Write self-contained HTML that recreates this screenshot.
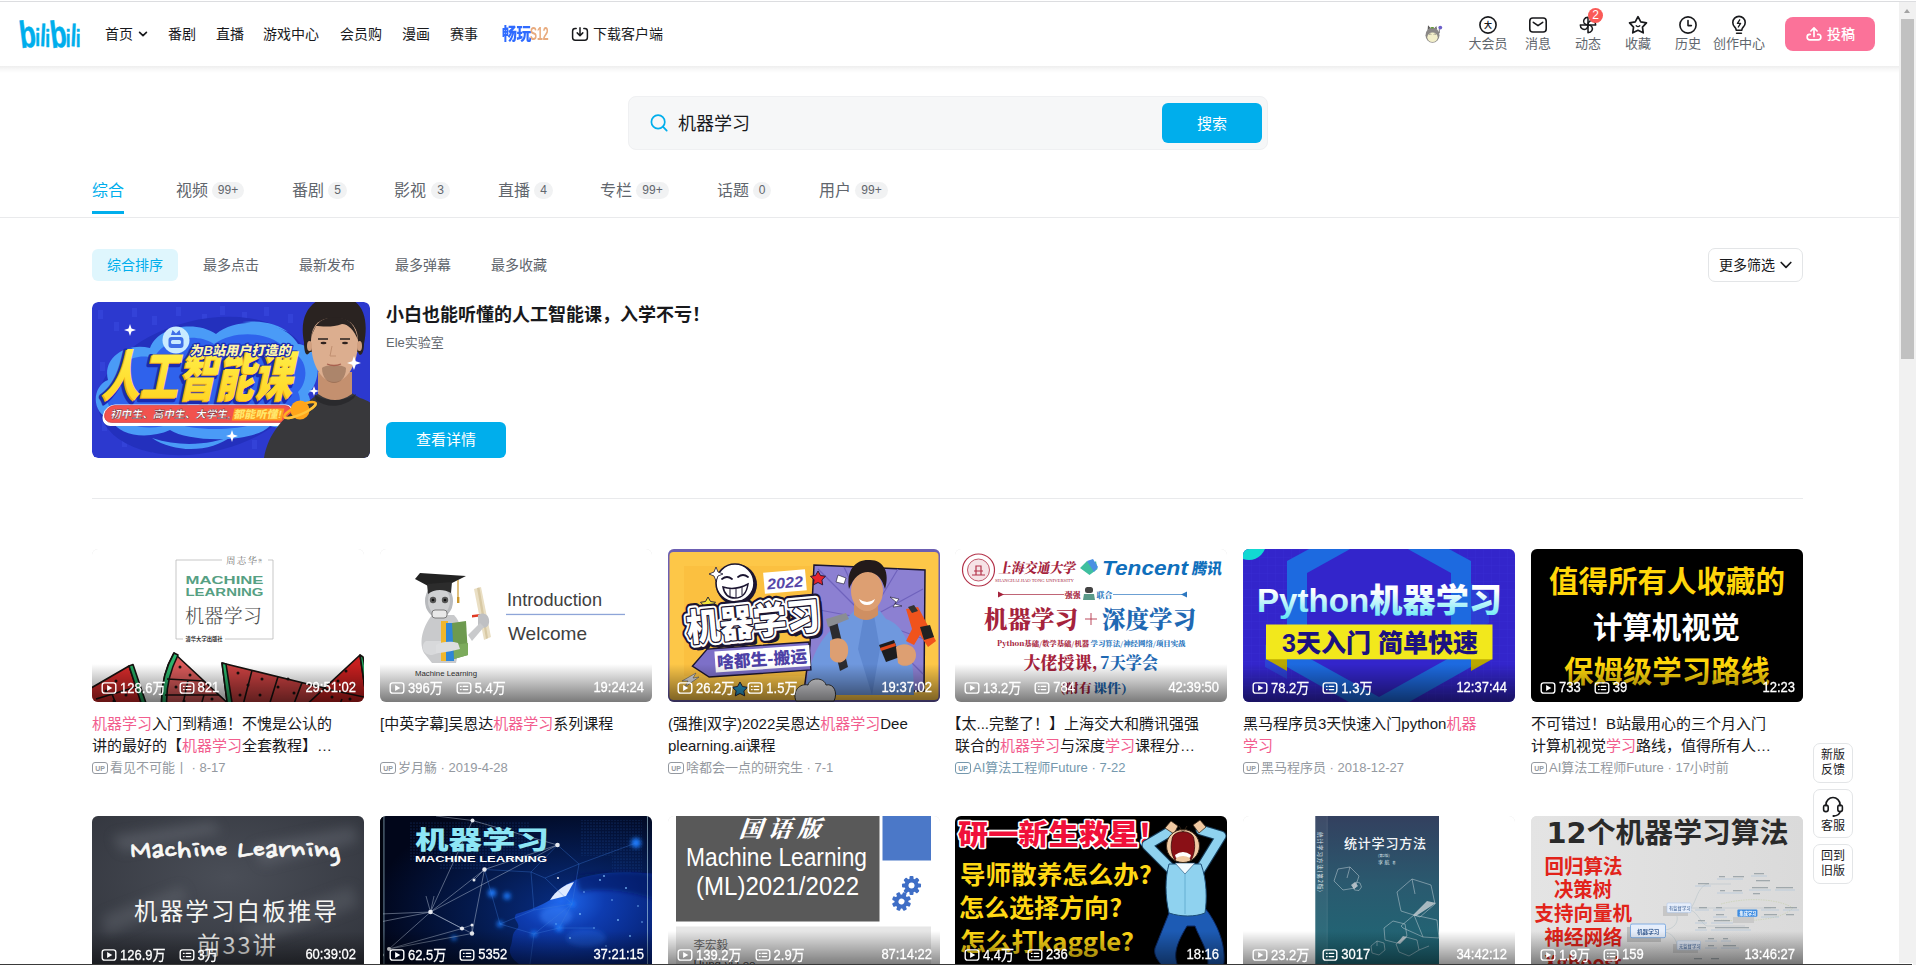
<!DOCTYPE html>
<html lang="zh-CN">
<head>
<meta charset="utf-8">
<title>机器学习-哔哩哔哩_Bilibili</title>
<style>
*{box-sizing:border-box;margin:0;padding:0}
html,body{width:1916px;height:965px;overflow:hidden;background:#fff}
body{position:relative;font-family:"Liberation Sans","Noto Sans CJK SC",sans-serif;color:#18191c;font-size:14px;-webkit-font-smoothing:antialiased}
.abs{position:absolute}
a{color:inherit;text-decoration:none}
/* top chrome line */
#topline{position:absolute;left:0;top:1px;width:1916px;height:1px;background:#dcdde0;z-index:50}
/* header */
#hdr{position:absolute;left:0;top:2px;width:1899px;height:64px;background:#fff;z-index:10}
#hsh{position:absolute;left:0;top:66px;width:1899px;height:7px;background:linear-gradient(rgba(0,0,0,.068),rgba(0,0,0,.03) 45%,rgba(0,0,0,0));z-index:9}
.nav{position:absolute;top:0;height:64px;line-height:64px;font-size:14px;color:#18191c;white-space:nowrap}
.ri{position:absolute;top:0;width:60px;text-align:center;font-size:13px;color:#61666d;white-space:nowrap}
.ri span{position:absolute;left:0;width:100%;top:33px;line-height:18px}
.ri svg{position:absolute;left:50%;margin-left:-10px;top:13px;width:20px;height:20px}
#upload{position:absolute;left:1785px;top:15px;width:90px;height:34px;border-radius:8px;background:#fb7299;color:#fff;font-size:14px;font-weight:500}
/* scrollbar */
#sb{position:absolute;left:1899px;top:2px;width:17px;height:961px;background:#f1f1f1;z-index:40}
#sbc{position:absolute;left:1913px;top:963px;width:3px;height:2px;background:#f1f1f1;z-index:61}
#sb i{position:absolute;left:2px;top:17px;width:13px;height:340px;background:#c1c1c1}
#sb b{position:absolute;left:5px;top:6.500px;width:0;height:0;border:3.500px solid transparent;border-top:0;border-bottom:4px solid #a3a3a3}
/* search */
#sbox{position:absolute;left:628px;top:96px;width:640px;height:54px;border:1px solid #eff0f2;border-radius:8px;background:#f6f7f8}
#sbox .q{position:absolute;left:49px;top:2px;line-height:51px;font-size:18px;color:#18191c}
#sbox .btn{position:absolute;left:533px;top:6px;width:100px;height:40px;border-radius:6px;background:#00aeec;color:#fff;font-size:15px;text-align:center;line-height:41px}
/* tabs */
.tab{position:absolute;top:178.600px;font-size:16px;line-height:24px;color:#61666d;white-space:nowrap}
.tab.on{color:#00aeec}
.bdg{position:absolute;top:182px;height:17px;line-height:17px;border-radius:8.500px;background:#f1f2f3;color:#61666d;font-size:12px;text-align:center}
#tabline{position:absolute;left:0;top:217px;width:1899px;height:1px;background:#e9eaec}
#tabind{position:absolute;left:92px;top:211px;width:32px;height:3px;background:#00aeec}
/* sort */
.chip{position:absolute;top:249px;width:86px;height:32px;line-height:33px;text-align:center;font-size:14px;color:#61666d;border-radius:6px;white-space:nowrap}
.chip.on{background:#dff6fd;color:#00aeec}
#more{position:absolute;left:1708px;top:248px;width:95px;height:34px;border:1px solid #e3e5e7;border-radius:7px;font-size:14px;line-height:32px;color:#18191c;padding-left:10px}
/* cards */
.card{position:absolute;width:272px}
.th{position:absolute;left:0;top:0;width:272px;height:153px;border-radius:6px;overflow:hidden;background:#ddd}
.th .mask{position:absolute;left:0;bottom:0;width:100%;height:38px;background:linear-gradient(180deg,rgba(0,0,0,0) 0%,rgba(0,0,0,.52) 100%);z-index:5}
.st{position:absolute;left:0;top:127px;width:272px;height:22px;padding:0 8px;display:flex;align-items:center;color:#fff;font-size:13px;z-index:6;white-space:nowrap}
.st svg{width:18px;height:18px;margin-right:2px;flex:none;position:relative;top:.8px}
.st span{-webkit-text-stroke:.25px #fff;transform:scaleY(1.09);transform-origin:50% 72%}
.st .v{margin-right:12px}
.st .du{margin-left:auto}
.ti{position:absolute;left:0;top:0;display:block}
.tt{position:absolute;left:0;top:163.600px;width:250px;font-size:15px;line-height:22px;color:#18191c;word-break:break-all;white-space:nowrap}
.tt em{font-style:normal;color:#f25d8e}
.tt .lb{font-style:normal;margin-left:-8.500px}
.mt{position:absolute;left:0;top:208.500px;width:272px;font-size:13px;line-height:20px;color:#9499a0;white-space:nowrap;padding-left:18px}
.mt svg{position:absolute;left:0;top:4px;width:16px;height:12px}
.mt.bl{color:#7598ad}
/* float */
.fl{position:absolute;left:1813px;width:40px;border:1px solid #e3e5e7;border-radius:7px;background:#fff;font-size:12px;line-height:14px;color:#18191c;text-align:center;z-index:20}
#botline{position:absolute;left:0;top:964px;width:1912px;height:1px;background:#3a3a3a;z-index:60}
</style>
</head>
<body>
<div id="topline"></div>
<div id="hdr">
<svg class="abs" style="left:18px;top:14px;width:68px;height:38px" viewBox="0 0 68 38"><g font-family="Liberation Sans, sans-serif" font-weight="bold" fill="#00aeec" stroke="#00aeec" stroke-width=".5"><text transform="translate(3.04 32.30) rotate(-7) scale(0.70 1)" font-size="38.0">b</text><text transform="translate(17.16 30.30) rotate(0) scale(0.75 1)" font-size="23.0">i</text><text transform="translate(21.69 30.00) rotate(3) scale(0.64 1)" font-size="31.0">l</text><text transform="translate(27.26 30.60) rotate(0) scale(0.75 1)" font-size="23.0">i</text><text transform="translate(33.64 32.30) rotate(-7) scale(0.70 1)" font-size="38.0">b</text><text transform="translate(47.66 30.60) rotate(0) scale(0.75 1)" font-size="23.0">i</text><text transform="translate(52.19 30.00) rotate(3) scale(0.64 1)" font-size="31.0">l</text><text transform="translate(57.66 30.80) rotate(0) scale(0.75 1)" font-size="23.0">i</text></g></svg>
<div class="nav" style="left:105px">首页</div>
<svg class="abs" style="left:138px;top:27px;width:10px;height:10px" viewBox="0 0 10 10"><path d="M1.6 3.4 L5 6.6 L8.4 3.4" fill="none" stroke="#18191c" stroke-width="1.7" stroke-linecap="round" stroke-linejoin="round"/></svg>
<div class="nav" style="left:168px">番剧</div>
<div class="nav" style="left:216px">直播</div>
<div class="nav" style="left:263px">游戏中心</div>
<div class="nav" style="left:340px">会员购</div>
<div class="nav" style="left:402px">漫画</div>
<div class="nav" style="left:450px">赛事</div>
<div class="nav" style="left:501.500px;font-weight:900;font-size:16.500px;letter-spacing:-.5px;transform:scaleX(.9);transform-origin:0 50%;color:#2f6bff">畅玩</div><div class="nav" style="left:530px;font-weight:bold;font-size:17.500px;transform:scaleX(.6);transform-origin:0 50%;color:#e8ab7e">S12</div>
<svg class="abs" style="left:571px;top:24px;width:18px;height:16px" viewBox="0 0 18 16"><path d="M5.2 2.6H4.2C2.7 2.6 1.6 3.7 1.6 5.2v6.4c0 1.5 1.1 2.6 2.6 2.6h9.6c1.5 0 2.6-1.100 2.6-2.600V5.200c0-1.500-1.100-2.600-2.600-2.600h-1" fill="none" stroke="#18191c" stroke-width="1.5" stroke-linecap="round"/><path d="M9 1.800v7.600M6.200 6.900 9 9.700l2.800-2.800" fill="none" stroke="#18191c" stroke-width="1.500" stroke-linecap="round" stroke-linejoin="round"/></svg>
<div class="nav" style="left:593px">下载客户端</div>

<svg class="abs" style="left:1423px;top:21px;width:22px;height:22px" viewBox="0 0 22 22"><path d="M4.600 7 L5 2.300 L8 5.500Z M11.500 5.500 L13.300 3 L14 6.500Z" fill="#5c5a5a"/><ellipse cx="9.500" cy="12.200" rx="7" ry="7.600" fill="#8b8887"/><ellipse cx="9.500" cy="14.300" rx="5.200" ry="4.800" fill="#f3efca"/><ellipse cx="9.300" cy="4.800" rx="1.800" ry=".8" fill="#5e9a2e"/><path d="M6 11.500 q1.200-1 2.400 0 M10.600 11.500 q1.200-1 2.400 0" stroke="#6a6866" stroke-width=".6" fill="none"/><circle cx="17.300" cy="4.600" r="1.900" fill="#6c5fc9"/><path d="M16.300 6.200 v4" stroke="#5a5858" stroke-width=".8"/></svg>

<div class="ri" style="left:1458px"><svg viewBox="0 0 20 20"><circle cx="10" cy="10" r="8.100" fill="none" stroke="#18191c" stroke-width="1.600"/><text x="10" y="12.900" text-anchor="middle" font-size="8" font-weight="bold" fill="#18191c" font-family="Noto Sans CJK SC, sans-serif">大</text></svg><span>大会员</span></div>
<div class="ri" style="left:1508px"><svg viewBox="0 0 20 20"><rect x="1.800" y="3" width="16.400" height="14" rx="3" fill="none" stroke="#18191c" stroke-width="1.600"/><path d="M5.300 7.300 10 10.600l4.700-3.300" fill="none" stroke="#18191c" stroke-width="1.600" stroke-linecap="round" stroke-linejoin="round"/></svg><span>消息</span></div>
<div class="ri" style="left:1558px"><svg viewBox="0 0 20 20"><g fill="none" stroke="#18191c" stroke-width="1.500" stroke-linejoin="round"><path d="M10 10V2.300C6.300 2.300 4.700 5.800 6.100 8.200 7 9.600 8.700 10 10 10Z"/><path d="M10 10V2.300C6.300 2.300 4.700 5.800 6.100 8.200 7 9.600 8.700 10 10 10Z" transform="rotate(90 10 10)"/><path d="M10 10V2.300C6.300 2.300 4.700 5.800 6.100 8.200 7 9.600 8.700 10 10 10Z" transform="rotate(180 10 10)"/><path d="M10 10V2.300C6.300 2.300 4.700 5.800 6.100 8.200 7 9.600 8.700 10 10 10Z" transform="rotate(270 10 10)"/></g></svg><span>动态</span></div>
<div class="abs" style="left:1588px;top:6px;width:15px;height:15px;border-radius:50%;background:#fa5a57;color:#fff;font-size:12px;line-height:15px;text-align:center;z-index:3">2</div>
<div class="ri" style="left:1608px"><svg viewBox="0 0 20 20"><path d="M10.00 1.70 12.76 6.80 18.46 7.85 14.47 12.05 15.23 17.80 10.00 15.30 4.77 17.80 5.53 12.05 1.54 7.85 7.24 6.80Z" fill="none" stroke="#18191c" stroke-width="1.700" stroke-linejoin="round"/><path d="M8.200 10.800q1.800 1.700 3.600 0" fill="none" stroke="#18191c" stroke-width="1.300" stroke-linecap="round"/></svg><span>收藏</span></div>
<div class="ri" style="left:1658px"><svg viewBox="0 0 20 20"><circle cx="10" cy="10" r="8.100" fill="none" stroke="#18191c" stroke-width="1.600"/><path d="M10 5.500V10.600H13.400" fill="none" stroke="#18191c" stroke-width="1.600" stroke-linecap="round" stroke-linejoin="round"/></svg><span>历史</span></div>
<div class="ri" style="left:1709px"><svg viewBox="0 0 20 20"><path d="M7.200 15.200c0-1.600-.6-2.300-1.600-3.300A6.200 6.200 0 1 1 14.400 11.900c-1 1-1.600 1.700-1.600 3.300Z" fill="none" stroke="#18191c" stroke-width="1.600" stroke-linejoin="round"/><path d="M7.600 18.300h4.800" stroke="#18191c" stroke-width="1.600" stroke-linecap="round"/><path d="M10.700 4.800 8.400 8.400h3.200L9.300 12" fill="none" stroke="#18191c" stroke-width="1.300" stroke-linecap="round" stroke-linejoin="round"/></svg><span>创作中心</span></div>
<div id="upload"><svg class="abs" style="left:20px;top:8px;width:18px;height:18px" viewBox="0 0 18 18"><path d="M5.300 9.300H4.600a2.400 2.400 0 0 0-2.400 2.400v.8a2.400 2.400 0 0 0 2.400 2.400h8.800a2.400 2.400 0 0 0 2.400-2.400v-.8a2.400 2.400 0 0 0-2.400-2.400h-.7" fill="none" stroke="#fff" stroke-width="1.700" stroke-linecap="round"/><path d="M9 11.500V3.200M5.900 6 9 2.900 12.100 6" fill="none" stroke="#fff" stroke-width="1.700" stroke-linecap="round" stroke-linejoin="round"/></svg><span class="abs" style="left:42px;top:0;line-height:34px">投稿</span></div>

</div>
<div id="hsh"></div>
<div id="sb"><b></b><i></i></div><div id="sbc"></div>
<div id="sbox"><svg class="abs" style="left:21px;top:17px;width:20px;height:20px" viewBox="0 0 20 20"><circle cx="8.100" cy="7.900" r="6.700" fill="none" stroke="#00aeec" stroke-width="1.700"/><path d="M12.900 12.700 16.700 16.600" stroke="#00aeec" stroke-width="1.800" stroke-linecap="round"/></svg><div class="q">机器学习</div><div class="btn">搜索</div></div>

<div class="tab on" style="left:92px">综合</div>
<div class="tab" style="left:176px">视频</div><div class="bdg" style="left:212px;width:32px">99+</div>
<div class="tab" style="left:292px">番剧</div><div class="bdg" style="left:328px;width:19px">5</div>
<div class="tab" style="left:394px">影视</div><div class="bdg" style="left:431px;width:19px">3</div>
<div class="tab" style="left:498px">直播</div><div class="bdg" style="left:534px;width:19px">4</div>
<div class="tab" style="left:600px">专栏</div><div class="bdg" style="left:636px;width:33px">99+</div>
<div class="tab" style="left:717px">话题</div><div class="bdg" style="left:753px;width:18px">0</div>
<div class="tab" style="left:819px">用户</div><div class="bdg" style="left:855px;width:33px">99+</div>
<div id="tabind"></div><div id="tabline"></div>

<div class="chip on" style="left:92px">综合排序</div>
<div class="chip" style="left:188px">最多点击</div>
<div class="chip" style="left:284px">最新发布</div>
<div class="chip" style="left:380px">最多弹幕</div>
<div class="chip" style="left:476px">最多收藏</div>
<div id="more">更多筛选<svg class="abs" style="left:70px;top:10px;width:14px;height:12px" viewBox="0 0 14 12"><path d="M2.200 3.500 7 8.300l4.800-4.800" fill="none" stroke="#18191c" stroke-width="1.700" stroke-linecap="round" stroke-linejoin="round"/></svg></div>

<svg class="abs" style="left:92px;top:302px;width:278px;height:156px;border-radius:6px" viewBox="0 0 278 156">
<defs><clipPath id="bc"><rect width="278" height="156" rx="6"/></clipPath>
<linearGradient id="yg" x1="0" y1="0" x2="0" y2="1"><stop offset="0" stop-color="#fff04a"/><stop offset="1" stop-color="#ffd21f"/></linearGradient></defs>
<g clip-path="url(#bc)">
<rect width="278" height="156" fill="#2c39cf"/>
<g fill="#3b4be0" opacity=".55"><rect x="6" y="8" width="5" height="9"/><rect x="22" y="20" width="5" height="9"/><rect x="40" y="6" width="5" height="9"/><rect x="60" y="14" width="5" height="9"/><rect x="84" y="5" width="5" height="9"/><rect x="110" y="12" width="5" height="9"/><rect x="128" y="4" width="5" height="9"/><rect x="150" y="10" width="5" height="9"/><rect x="172" y="5" width="5" height="9"/><rect x="196" y="12" width="5" height="9"/><rect x="10" y="120" width="5" height="9"/><rect x="30" y="136" width="5" height="9"/><rect x="60" y="142" width="5" height="9"/><rect x="100" y="140" width="5" height="9"/><rect x="140" y="130" width="5" height="9"/><rect x="8" y="60" width="5" height="9"/><rect x="160" y="138" width="5" height="9"/></g>
<ellipse cx="112" cy="84" rx="108" ry="66" fill="#2330bd" transform="rotate(-14 112 84)"/>
<path d="M20 118 C-2 112 0 84 16 78 C10 56 34 40 58 46 C66 24 104 18 124 32 C146 14 192 18 206 42 C228 44 232 76 216 92 C226 112 204 132 178 124 C160 142 96 140 78 128 C56 138 26 134 20 118Z" fill="#4a9bf7"/>
<path d="M28 112 C10 106 12 86 26 82 C22 62 42 50 62 56 C72 36 104 30 122 42 C144 26 184 30 196 50 C216 52 218 78 206 90 C214 106 196 122 174 116 C158 130 98 130 82 120 C62 130 34 126 28 112Z" fill="#2f62ec"/>
<path d="M60 136 C90 146 120 142 140 134 C120 150 84 152 60 136Z" fill="#4a9bf7"/>
<path d="M150 20 C170 18 186 22 196 30 C184 24 168 22 150 20Z" fill="#4a9bf7"/>
<circle cx="84" cy="38" r="13.500" fill="#c9ebff"/><rect x="76.500" y="35" width="15" height="11" rx="3" fill="#3f6fe8"/><rect x="79" y="38" width="10" height="4" rx="1.500" fill="#c9ebff"/><path d="M79 33 l1.500-5 3.500 3.500 3.500-3.500 1.500 5z" fill="#3f6fe8"/>
<g transform="skewX(-12)" font-family="Liberation Sans, Noto Sans CJK SC, sans-serif" font-weight="900">
<text x="28" y="96.500" font-size="55" fill="#1a2ab0" stroke="#1a2ab0" stroke-width="5" stroke-linejoin="round" textLength="190" lengthAdjust="spacingAndGlyphs">人工智能课</text><text x="28.500" y="95.500" font-size="55" fill="#f0a81a" textLength="190" lengthAdjust="spacingAndGlyphs">人工智能课</text>
<text x="30" y="94" font-size="55" fill="url(#yg)" textLength="190" lengthAdjust="spacingAndGlyphs">人工智能课</text>
<text x="109" y="53" font-size="13" fill="#1a2ab0" stroke="#1a2ab0" stroke-width="2.500" stroke-linejoin="round" textLength="101" lengthAdjust="spacingAndGlyphs">为B站用户打造的</text>
<text x="109" y="53" font-size="13" fill="#fff6a8" textLength="101" lengthAdjust="spacingAndGlyphs">为B站用户打造的</text>
</g>
<g transform="skewX(-12)">
<rect x="35" y="102.500" width="190" height="21.500" rx="10" fill="#fff"/>
<rect x="36.500" y="103.500" width="187" height="17" rx="8.500" fill="#f2524e" stroke="#c4303a" stroke-width=".6"/>
<rect x="165" y="106.500" width="50" height="12" fill="#ff9a1f"/>
<text x="43" y="116.500" font-size="10.500" font-weight="900" fill="#fff" stroke="#5a1a2a" stroke-width=".35" font-family="Liberation Sans, Noto Sans CJK SC, sans-serif" textLength="120" lengthAdjust="spacingAndGlyphs">初中生、高中生、大学生,</text>
<text x="166" y="116.500" font-size="10.500" font-weight="900" fill="#ffe66a" font-family="Liberation Sans, Noto Sans CJK SC, sans-serif" textLength="48" lengthAdjust="spacingAndGlyphs">都能听懂!</text>
</g>
<!-- person -->
<path d="M172 156 C176 132 192 112 216 100 L228 90 L258 90 L268 96 C274 98 278 100 280 102 L280 156Z" fill="#38383b"/>
<path d="M222 92 C232 100 252 100 264 92 L262 96 C250 106 234 106 224 98Z" fill="#2a2a2d"/>
<path d="M226 70 h34 v22 q-17 12 -34 0z" fill="#c4906f"/>
<path d="M212 40 C206 10 222 -6 244 -6 C268 -6 278 12 272 42 C272 52 268 56 266 50 L218 50 C214 56 212 50 212 40Z" fill="#2a2321"/>
<path d="M219 40 C219 24 226 16 242 16 C258 16 266 24 266 40 C266 60 256 80 242 80 C228 80 219 60 219 40Z" fill="#dcae8f"/>
<path d="M219 36 C222 22 230 14 244 16 C256 14 264 24 266 38 C262 28 256 22 250 22 C240 26 228 24 224 24 C222 28 220 32 219 36Z" fill="#2a2321"/>
<ellipse cx="217.500" cy="44" rx="2.500" ry="5" fill="#d1a080"/><ellipse cx="267.500" cy="44" rx="2.500" ry="5" fill="#d1a080"/>
<path d="M230 66 C234 62 250 62 254 66 C254 76 248 81 242 81 C236 81 230 76 230 66Z" fill="#5e4132" opacity=".38"/>
<path d="M226 37 h10 M248 37 h10" stroke="#2a2321" stroke-width="1.600"/>
<ellipse cx="231.500" cy="41" rx="3" ry="1.300" fill="#2e221e"/><ellipse cx="253" cy="41" rx="3" ry="1.300" fill="#2e221e"/>
<path d="M240 44 l-2 10 h6" stroke="#c08f70" stroke-width="1" fill="none"/>
<path d="M235 62 q7 3 14 0" stroke="#a8614f" stroke-width="1.300" fill="none"/>
<!-- planet -->
<ellipse cx="208" cy="108" rx="17" ry="4.500" fill="none" stroke="#ffb01f" stroke-width="2.500" transform="rotate(-24 208 108)"/>
<circle cx="208" cy="108" r="9.500" fill="#ffa51a"/>
<path d="M192.500 115 A17 4.500 -24 0 0 223.500 101" fill="none" stroke="#ffc43a" stroke-width="2.500"/>
<g fill="#fff"><path d="M38 22 l1.500 4.500 4.500 1.500 -4.500 1.500 -1.500 4.500 -1.500-4.500 -4.500-1.500 4.500-1.500z"/><path d="M262 54 l1.800 5.200 5.200 1.800 -5.200 1.800 -1.800 5.200 -1.800-5.200 -5.200-1.800 5.200-1.800z"/><path d="M222 84 l1.300 3.700 3.700 1.300 -3.700 1.300 -1.300 3.700 -1.300-3.700 -3.700-1.300 3.700-1.300z"/><path d="M140 128 l1.500 4.500 4.500 1.500 -4.500 1.500 -1.500 4.500 -1.500-4.500 -4.500-1.500 4.500-1.500z"/></g>
</g></svg>
<div class="abs" style="left:386px;top:302px;font-size:18px;line-height:26px;font-weight:bold;color:#18191c;white-space:nowrap">小白也能听懂的人工智能课，入学不亏！</div>
<div class="abs" style="left:386px;top:334px;font-size:13px;line-height:18px;color:#61666d;white-space:nowrap">Ele实验室</div>
<div class="abs" style="left:386px;top:422px;width:120px;height:36px;border-radius:6px;background:#00aeec;color:#fff;font-size:15px;line-height:36px;text-align:center">查看详情</div>
<div class="abs" style="left:92px;top:498px;width:1711px;height:1px;background:#e9eaec"></div>

<div class="card" style="left:92px;top:549px"><div class="th"><svg class="ti" viewBox="0 0 272 153" width="272" height="153"><rect width="272" height="153" fill="#fff"/>
<path d="M130 11H84V90H91M133 90H181V11H176" fill="none" stroke="#b9b9b9" stroke-width=".8"/>
<text x="134" y="14.500" font-family="Noto Serif CJK SC, serif" font-size="9.500" fill="#777" letter-spacing="1.200">周志华</text><text x="166" y="14" font-family="Noto Serif CJK SC, serif" font-size="4" fill="#777">著</text>
<g font-family="Liberation Sans, sans-serif" font-weight="bold" font-size="11.500" fill="#56a083"><text x="93.500" y="35" textLength="78" lengthAdjust="spacingAndGlyphs">MACHINE</text><text x="93.500" y="47.300" textLength="78" lengthAdjust="spacingAndGlyphs">LEARNING</text></g>
<text x="93" y="73.500" font-family="Noto Serif CJK SC, serif" font-weight="300" font-size="19" fill="#4c4c4c" textLength="77" lengthAdjust="spacing">机器学习</text>
<text x="93.500" y="91.500" font-family="Noto Sans CJK SC, sans-serif" font-weight="bold" font-size="5.300" fill="#333">清华大学出版社</text>
<g stroke="#16110f" stroke-width="1.600" stroke-linejoin="round">
<path d="M-6 142 L37 117 L52 160 L-6 160Z" fill="#d42a2a"/><path d="M37 117 L41 115.500 L56 160 L51 160Z" fill="#22a45d"/>
<path d="M70 160 C68 136 74 118 82 104 L142 160Z" fill="#d95a5a"/><path d="M82 104 L86 106 C79 120 73 138 75 160 L70 160 C68 136 74 118 82 104Z" fill="#2bb56c"/>
<path d="M130 114 L236 140 L222 160 L136 160Z" fill="#c94040"/><path d="M130 114 L134 115 L141 160 L136 160Z" fill="#2bb56c"/>
<path d="M210 160 L268 106 L276 160Z" fill="#c81f1f"/><path d="M268 106 L271 108 L280 150 L276 160Z" fill="#22a45d"/>
<path d="M75 130 L112 132 M73 146 L127 146 M96 131 L90 160 M112 146 L108 160 M160 121.400 L150 160 M186 127.700 L176 160 M210 133.600 L200 160 M232 139.500 L272 148 M250 150 L246 160 M4 150 L44 138 M20 145 L26 160" fill="none"/>
</g>
<g fill="#16110f"><circle cx="88" cy="118" r="1.500"/><circle cx="98" cy="126" r="1.500"/><circle cx="84" cy="138" r="1.500"/><circle cx="100" cy="144" r="1.500"/><circle cx="112" cy="138" r="1.500"/><circle cx="92" cy="152" r="1.500"/><circle cx="120" cy="150" r="1.500"/><circle cx="146" cy="124" r="1.500"/><circle cx="156" cy="136" r="1.500"/><circle cx="148" cy="146" r="1.500"/><circle cx="170" cy="130" r="1.500"/><circle cx="168" cy="146" r="1.500"/><circle cx="186" cy="138" r="1.500"/><circle cx="196" cy="130" r="1.500"/><circle cx="202" cy="144" r="1.500"/><circle cx="216" cy="140" r="1.500"/><circle cx="246" cy="132" r="1.500"/><circle cx="254" cy="122" r="1.500"/><circle cx="262" cy="136" r="1.500"/><circle cx="240" cy="148" r="1.500"/><circle cx="258" cy="150" r="1.500"/><circle cx="24" cy="132" r="1.500"/><circle cx="14" cy="142" r="1.500"/><circle cx="34" cy="146" r="1.500"/><circle cx="22" cy="152" r="1.500"/></g>
</svg><div class="mask"></div><div class="st"><svg viewBox="0 0 18 18"><rect x="2.2" y="3.9" width="13.6" height="10.200" rx="2.400" fill="none" stroke="#fff" stroke-width="1.400"/><path d="M7.100 6.100v5.800l5.200-2.900z" fill="#fff"/></svg><span class="v">128.6万</span><svg viewBox="0 0 18 18"><rect x="2.2" y="3.9" width="13.6" height="10.200" rx="2.400" fill="none" stroke="#fff" stroke-width="1.400"/><path d="M5.500 7.400h.6M8.200 7.400h4.500M5.500 10.600h.6M8.200 10.600h4.500" stroke="#fff" stroke-width="1.300" stroke-linecap="round"/></svg><span class="v">821</span><span class="du">29:51:02</span></div></div><div class="tt"><em>机器学习</em>入门到精通！不愧是公认的<br>讲的最好的【<em>机器学习</em>全套教程】…</div><div class="mt"><svg viewBox="0 0 16 12"><rect x=".5" y=".5" width="15" height="11" rx="2.500" fill="none" stroke="#9499a0" stroke-width="1"/><text x="8" y="8.800" text-anchor="middle" font-size="7" font-weight="bold" fill="#9499a0" font-family="Liberation Sans, sans-serif">UP</text></svg>看见不可能丨 · 8-17</div></div>
<div class="card" style="left:380px;top:549px"><div class="th"><svg class="ti" viewBox="0 0 272 153" width="272" height="153"><rect width="272" height="153" fill="#fff"/>
<g>
<path d="M52 66 C44 76 38 92 44 104 L52 114 H76 L80 96 C84 84 80 72 74 66Z" fill="#c9cacc"/>
<path d="M46 92 C40 96 42 106 52 106 L72 100 L70 92Z" fill="#d8d9db"/>
<ellipse cx="59" cy="52" rx="14" ry="17" fill="#b8babd"/><ellipse cx="59" cy="52" rx="11" ry="14" fill="#cfd0d2"/>
<circle cx="53" cy="51" r="3.200" fill="#555"/><circle cx="65" cy="51" r="3.200" fill="#555"/><circle cx="53" cy="51" r="1.300" fill="#111"/><circle cx="65" cy="51" r="1.300" fill="#111"/>
<rect x="52" y="61" width="15" height="8" rx="3" fill="#e9e9e9" stroke="#666" stroke-width=".8"/>
<path d="M35 30 L40 24 L86 27 L72 34 L50 38Z" fill="#222"/><path d="M47 35 L72 33 L71 44 C64 40 54 40 48 45Z" fill="#2c2c2c"/>
<path d="M78 31 V50" stroke="#c9952a" stroke-width="1.200"/><rect x="77" y="48" width="2.400" height="6" fill="#c9952a"/>
<rect x="61" y="72" width="7" height="40" fill="#f0b62c"/><rect x="66" y="74" width="8" height="38" fill="#2f86d8"/><path d="M72 74 L86 72 L88 106 L74 110Z" fill="#6d9a4f"/><path d="M74 96 L88 94 L88 106 L74 110Z" fill="#7cab5c"/>
<path d="M56 96 C62 92 72 92 78 94 L80 100 C72 102 62 104 56 104Z" fill="#dcdddf"/>
<path d="M94 40 L101 38 L111 88 L104 91Z" fill="#eadfc4"/><path d="M97 39 L99.500 38.500 L108 89 L106 90Z" fill="#d8c9a4"/>
<path d="M92 66 L100 65 L100 67.500 L92 68.500Z" fill="#e03a24"/>
<path d="M98 66 C104 62 110 66 109 74 C108 80 100 80 98 76Z" fill="#bfc0c3"/><path d="M88 86 L100 74 L104 78 L92 92Z" fill="#c9cacc"/>
</g>
<g font-family="Liberation Sans, sans-serif" fill="#404040"><text x="127" y="57" font-size="17.500" textLength="95" lengthAdjust="spacingAndGlyphs">Introduction</text><text x="128" y="90.500" font-size="19" textLength="79" lengthAdjust="spacingAndGlyphs">Welcome</text>
<text x="35" y="126.500" font-size="6.300" fill="#333" textLength="62" lengthAdjust="spacingAndGlyphs">Machine Learning</text></g>
<rect x="126" y="64.800" width="119" height="1.300" fill="#8ea5d8"/>
</svg><div class="mask"></div><div class="st"><svg viewBox="0 0 18 18"><rect x="2.2" y="3.9" width="13.6" height="10.200" rx="2.400" fill="none" stroke="#fff" stroke-width="1.400"/><path d="M7.100 6.100v5.800l5.200-2.900z" fill="#fff"/></svg><span class="v">396万</span><svg viewBox="0 0 18 18"><rect x="2.2" y="3.9" width="13.6" height="10.200" rx="2.400" fill="none" stroke="#fff" stroke-width="1.400"/><path d="M5.500 7.400h.6M8.200 7.400h4.500M5.500 10.600h.6M8.200 10.600h4.500" stroke="#fff" stroke-width="1.300" stroke-linecap="round"/></svg><span class="v">5.4万</span><span class="du">19:24:24</span></div></div><div class="tt">[中英字幕]吴恩达<em>机器学习</em>系列课程</div><div class="mt"><svg viewBox="0 0 16 12"><rect x=".5" y=".5" width="15" height="11" rx="2.500" fill="none" stroke="#9499a0" stroke-width="1"/><text x="8" y="8.800" text-anchor="middle" font-size="7" font-weight="bold" fill="#9499a0" font-family="Liberation Sans, sans-serif">UP</text></svg>岁月觞 · 2019-4-28</div></div>
<div class="card" style="left:668px;top:549px"><div class="th"><svg class="ti" viewBox="0 0 272 153" width="272" height="153"><rect width="272" height="153" fill="#6c5fb3"/>
<rect x="1.500" y="3" width="269" height="148" rx="4" fill="#fdc748"/>
<rect x="16" y="17" width="128" height="110" fill="#f9b93a" opacity=".55"/>
<path d="M146 16 L257 21 L256 142 L136 142 L142 96Z" fill="#8c80d2" stroke="#1b1530" stroke-width="1.500"/>
<g stroke="#6f62bd" stroke-width="1.200"><path d="M200 70 L150 20M200 70 L176 18M200 70 L230 20M200 70 L255 40M200 70 L256 90M200 70 L255 125M200 70 L150 120M200 70 L146 60"/></g>
<path d="M170 26 l8 3 -2 6 -8-2z M222 48 l9 2 -4 5 7 2 -9 1 3-5z" fill="#fff" stroke="#1b1530" stroke-width=".6"/>
<!-- person -->
<path d="M137 146 C140 112 152 84 178 70 L186 62 H212 L218 70 C236 76 246 96 246 146Z" fill="#6f98de"/>
<path d="M196 66 L190 100 L204 146 L212 100 L206 66Z" fill="#5f88d0"/>
<path d="M186 50 h24 v16 q-12 10 -24 0z" fill="#cf8f62"/>
<ellipse cx="199" cy="42" rx="16" ry="20" fill="#dd9f72"/>
<path d="M181 40 C178 20 188 10 202 11 C216 11 222 24 217 40 C214 30 210 24 200 23 C192 23 186 28 181 40Z" fill="#231a1a"/>
<path d="M191 50 q8 6 16 0 q-2 6 -8 6 q-6 0 -8-6z" fill="#fff"/>
<!-- hammer -->
<path d="M160 72 L168 68 L180 118 L172 122Z" fill="#2c2c30"/><path d="M158 70 L178 64 L181 70 L166 76 L160 78Z" fill="#8a8d92"/>
<path d="M162 92 C170 86 182 90 180 104 C178 116 166 116 162 108Z" fill="#dd9f72"/>
<!-- drill -->
<path d="M238 60 L250 58 L268 92 L260 98 L252 86 L246 96 L238 92 L244 80Z" fill="#f0531c"/><path d="M240 58 L246 56 L250 62 L244 64Z" fill="#333"/><path d="M252 78 l10-2 4 12 -10 3z" fill="#222"/>
<path d="M211 96 L226 91 L232 108 L218 113Z" fill="#1d1d1f"/><path d="M212 99 L227 94 L228 97 L213 102Z" fill="#e0481a"/>
<path d="M228 98 C236 92 248 96 248 106 C248 116 236 120 230 114Z" fill="#dd9f72"/>
<!-- smiley -->
<circle cx="68.500" cy="35.500" r="20.500" fill="#1b1530"/><circle cx="67" cy="34" r="19" fill="#fff" stroke="#1b1530" stroke-width="1.600"/>
<path d="M54 30 q5-4 10 0M70 28 q5-4 10 0" fill="none" stroke="#1b1530" stroke-width="1.800" stroke-linecap="round"/><path d="M55 38 q12 4 25-3 q-2 14 -13 14 q-10 0 -12-11z" fill="#fff" stroke="#1b1530" stroke-width="1.500"/><path d="M62 40v8M68 40v9M74 38v8" stroke="#1b1530" stroke-width="1"/>
<path d="M48 18 l2 5 5 2 -5 2 -2 5 -2-5 -5-2 5-2z" fill="#fff" stroke="#1b1530" stroke-width=".8"/>
<path d="M40 48 l2.500 4.500 5 .8 -3.600 3.600 .8 5 -4.700-2.400 -4.700 2.400 .8-5 -3.600-3.600 5-.8z" fill="#f2e53a" stroke="#1b1530" stroke-width=".9"/>
<path d="M150 22 l2.500 4.500 5 .8 -3.600 3.600 .8 5 -4.700-2.400 -4.700 2.400 .8-5 -3.600-3.600 5-.8z" fill="#e8242c" stroke="#1b1530" stroke-width=".9"/>
<!-- 2022 -->
<g transform="rotate(-5 117 33)"><rect x="96" y="22" width="42" height="21" fill="#fff"/><text x="117" y="39" text-anchor="middle" font-family="Liberation Sans, sans-serif" font-weight="bold" font-style="italic" font-size="15" fill="#5546a8" textLength="36" lengthAdjust="spacingAndGlyphs">2022</text></g>
<!-- title -->
<g transform="rotate(-5.500 85 72)" font-family="Noto Sans CJK SC, sans-serif" font-weight="900" font-size="37">
<text x="19" y="87.500" fill="#1b1530" stroke="#1b1530" stroke-width="5" stroke-linejoin="round" textLength="134" lengthAdjust="spacingAndGlyphs" transform="translate(2.500 2.500)">机器学习</text>
<text x="18" y="86" fill="#1b1530" stroke="#1b1530" stroke-width="11.500" stroke-linejoin="round" textLength="134" lengthAdjust="spacingAndGlyphs">机器学习</text>
<text x="18" y="86" fill="#fff" stroke="#fff" stroke-width="7" stroke-linejoin="round" textLength="134" lengthAdjust="spacingAndGlyphs">机器学习</text>
<text x="18" y="86" fill="#fff" stroke="#1b1530" stroke-width="2.600" stroke-linejoin="round" paint-order="stroke" textLength="134" lengthAdjust="spacingAndGlyphs">机器学习</text>
</g>
<!-- ribbon -->
<g transform="rotate(-4 84 110)"><path d="M24 113 L40 97 H142 V125 H40Z" fill="#7d70c8" stroke="#1b1530" stroke-width="1.400"/><rect x="47" y="100" width="95" height="21" fill="#fff"/><text x="49" y="117" font-family="Noto Sans CJK SC, sans-serif" font-weight="900" font-size="16.500" fill="#4d41a6" textLength="90" lengthAdjust="spacingAndGlyphs">啥都生-搬运</text></g>
<path d="M14 132 l14-8 -3 5 6-1 -14 10 3-6z" fill="#d9d9de" stroke="#555" stroke-width=".6"/>
<path d="M72 133 l2.500 4.500 5 .8 -3.600 3.600 .8 5 -4.700-2.400 -4.700 2.400 .8-5 -3.600-3.600 5-.8z" fill="#2a9ac9" stroke="#1b1530" stroke-width=".9"/>
<path d="M128 152 C124 142 132 134 140 136 C142 128 156 128 158 136 C166 134 170 144 166 152Z" fill="#d6d6da" stroke="#333" stroke-width="1"/>
</svg><div class="mask"></div><div class="st"><svg viewBox="0 0 18 18"><rect x="2.2" y="3.9" width="13.6" height="10.200" rx="2.400" fill="none" stroke="#fff" stroke-width="1.400"/><path d="M7.100 6.100v5.800l5.200-2.900z" fill="#fff"/></svg><span class="v">26.2万</span><svg viewBox="0 0 18 18"><rect x="2.2" y="3.9" width="13.6" height="10.200" rx="2.400" fill="none" stroke="#fff" stroke-width="1.400"/><path d="M5.500 7.400h.6M8.200 7.400h4.500M5.500 10.600h.6M8.200 10.600h4.500" stroke="#fff" stroke-width="1.300" stroke-linecap="round"/></svg><span class="v">1.5万</span><span class="du">19:37:02</span></div></div><div class="tt">(强推|双字)2022吴恩达<em>机器学习</em>Dee<br>plearning.ai课程</div><div class="mt"><svg viewBox="0 0 16 12"><rect x=".5" y=".5" width="15" height="11" rx="2.500" fill="none" stroke="#9499a0" stroke-width="1"/><text x="8" y="8.800" text-anchor="middle" font-size="7" font-weight="bold" fill="#9499a0" font-family="Liberation Sans, sans-serif">UP</text></svg>啥都会一点的研究生 · 7-1</div></div>
<div class="card" style="left:955px;top:549px"><div class="th"><svg class="ti" viewBox="0 0 272 153" width="272" height="153"><rect width="272" height="153" fill="#fff"/>
<circle cx="23.500" cy="21" r="16" fill="#fff" stroke="#b3334a" stroke-width="1.200"/><circle cx="23.500" cy="21" r="11" fill="#f6e3e6" stroke="#b3334a" stroke-width=".8"/><path d="M17 26 h13 M19 22 h9 M21 17 h5 v9 h-5z" stroke="#b3334a" stroke-width="1.200" fill="none"/>
<text x="47.500" y="24.500" font-family="Noto Serif CJK SC, serif" font-weight="900" font-size="14" fill="#a5233c" textLength="77" lengthAdjust="spacingAndGlyphs" transform="skewX(-10)">上海交通大学</text>
<text x="40" y="32.700" font-family="Liberation Serif, serif" font-size="4.300" fill="#a5233c" textLength="79" lengthAdjust="spacingAndGlyphs">SHANGHAI JIAO TONG UNIVERSITY</text>
<path d="M125 19 l7-7 5 4 4-4 1.500 8 -8 6z" fill="#3fbf9f"/><path d="M132 12 l6-2 5 8 -4 5z" fill="#4a90e2"/>
<text x="147" y="25.500" font-family="Liberation Sans, sans-serif" font-weight="bold" font-style="italic" font-size="20" fill="#0f6fbc" textLength="86" lengthAdjust="spacingAndGlyphs">Tencent</text>
<text x="240" y="25" font-family="Noto Sans CJK SC, sans-serif" font-weight="900" font-size="15.500" fill="#0f6fbc" transform="skewX(-8)" textLength="30" lengthAdjust="spacingAndGlyphs">腾讯</text>
<path d="M43 42.500 l6 3 -6 3z" fill="#a5233c"/><rect x="47" y="45.200" width="62" height=".7" fill="#a5233c"/>
<path d="M232 42.500 l-6 3 6 3z" fill="#2d78c0"/><rect x="158" y="45.200" width="70" height=".7" fill="#2d78c0"/>
<g font-family="Noto Serif CJK SC, serif" font-weight="900"><text x="109.500" y="48.500" font-size="8" fill="#a5233c">强强</text><text x="141.500" y="48.500" font-size="8" fill="#2d78c0">联合</text></g>
<rect x="130" y="38" width="8" height="6" rx="2.500" fill="#444"/><path d="M129 45 h10 l1 6 h-12z" fill="#5a9a8a"/>
<g font-family="Noto Serif CJK SC, serif" font-weight="900" font-size="24"><text x="29" y="79" fill="#a5233c" textLength="94" lengthAdjust="spacingAndGlyphs">机器学习</text><text x="147" y="79" fill="#1f69b3" textLength="94" lengthAdjust="spacingAndGlyphs">深度学习</text></g>
<path d="M136 64 v12 M130 70 h12" stroke="#b3334a" stroke-width=".9"/>
<g font-family="Noto Serif CJK SC, serif" font-weight="900" font-size="6.800"><text x="42" y="96.800" fill="#a5233c" textLength="92" lengthAdjust="spacingAndGlyphs">Python基础/数学基础/机器</text><text x="135.500" y="96.800" fill="#2d78c0" textLength="95" lengthAdjust="spacingAndGlyphs">学习算法/神经网络/项目实战</text></g>
<g font-family="Noto Serif CJK SC, serif" font-weight="900" font-size="17"><text x="68.500" y="120" fill="#a5233c" textLength="74" lengthAdjust="spacingAndGlyphs">大佬授课,</text><text x="145" y="120" fill="#1f69b3" textLength="58" lengthAdjust="spacingAndGlyphs">7天学会</text></g>
<g font-family="Noto Serif CJK SC, serif" font-weight="900" font-size="12"><text x="105" y="144" fill="#a5233c" textLength="32" lengthAdjust="spacingAndGlyphs">(附有</text><text x="138" y="144" fill="#1f69b3" textLength="34" lengthAdjust="spacingAndGlyphs">课件)</text></g>
</svg><div class="mask"></div><div class="st"><svg viewBox="0 0 18 18"><rect x="2.2" y="3.9" width="13.6" height="10.200" rx="2.400" fill="none" stroke="#fff" stroke-width="1.400"/><path d="M7.100 6.100v5.800l5.200-2.900z" fill="#fff"/></svg><span class="v">13.2万</span><svg viewBox="0 0 18 18"><rect x="2.2" y="3.9" width="13.6" height="10.200" rx="2.400" fill="none" stroke="#fff" stroke-width="1.400"/><path d="M5.500 7.400h.6M8.200 7.400h4.500M5.500 10.600h.6M8.200 10.600h4.500" stroke="#fff" stroke-width="1.300" stroke-linecap="round"/></svg><span class="v">784</span><span class="du">42:39:50</span></div></div><div class="tt"><i class="lb">【</i>太...完整了！】上海交大和腾讯强强<br>联合的<em>机器学习</em>与深度<em>学习</em>课程分…</div><div class="mt bl"><svg viewBox="0 0 16 12"><rect x=".5" y=".5" width="15" height="11" rx="2.500" fill="none" stroke="#7598ad" stroke-width="1"/><text x="8" y="8.800" text-anchor="middle" font-size="7" font-weight="bold" fill="#7598ad" font-family="Liberation Sans, sans-serif">UP</text></svg>AI算法工程师Future · 7-22</div></div>
<div class="card" style="left:1243px;top:549px"><div class="th"><svg class="ti" viewBox="0 0 272 153" width="272" height="153"><defs><linearGradient id="t5g" x1="0" y1="0" x2="0" y2="1"><stop offset=".25" stop-color="#fff"/><stop offset="1" stop-color="#5fe6f5"/></linearGradient>
<pattern id="t5p" width="8" height="8" patternUnits="userSpaceOnUse"><path d="M8 0H0V8" fill="none" stroke="#3b2fd6" stroke-width=".5"/></pattern></defs>
<rect width="272" height="153" fill="#3325cb"/><rect width="272" height="153" fill="url(#t5p)"/>
<path d="M136 -38 L228 12 L228 118 L136 170 L44 118 L44 12Z" fill="#1d6ae0"/>
<path d="M136 -16 L208 24 L208 108 L136 148 L64 108 L64 24Z" fill="#3325cb"/>
<path d="M22 96 L44 84 L44 130 L22 118Z" fill="#2a4fd8" opacity=".7"/><path d="M228 34 L246 44 L246 74 L228 84Z" fill="#2a4fd8" opacity=".6"/>
<circle cx="6" cy="-6" r="17" fill="#12d8d2"/>
<path d="M23 110 L44 110 L44 122Z" fill="#b9a800"/><path d="M249.500 110 L228 110 L228 122Z" fill="#b9a800"/>
<rect x="23" y="75.500" width="226.500" height="34.800" fill="#f2e81c"/>
<text x="14" y="63" font-family="Liberation Sans, Noto Sans CJK SC, sans-serif" font-weight="900" font-size="33" fill="url(#t5g)" textLength="245" lengthAdjust="spacingAndGlyphs">Python机器学习</text>
<text x="39" y="103" font-family="Liberation Sans, Noto Sans CJK SC, sans-serif" font-weight="900" font-size="25.500" fill="#1c1180" textLength="196" lengthAdjust="spacingAndGlyphs">3天入门 简单快速</text>
</svg><div class="mask"></div><div class="st"><svg viewBox="0 0 18 18"><rect x="2.2" y="3.9" width="13.6" height="10.200" rx="2.400" fill="none" stroke="#fff" stroke-width="1.400"/><path d="M7.100 6.100v5.800l5.200-2.900z" fill="#fff"/></svg><span class="v">78.2万</span><svg viewBox="0 0 18 18"><rect x="2.2" y="3.9" width="13.6" height="10.200" rx="2.400" fill="none" stroke="#fff" stroke-width="1.400"/><path d="M5.500 7.400h.6M8.200 7.400h4.500M5.500 10.600h.6M8.200 10.600h4.500" stroke="#fff" stroke-width="1.300" stroke-linecap="round"/></svg><span class="v">1.3万</span><span class="du">12:37:44</span></div></div><div class="tt">黑马程序员3天快速入门python<em>机器</em><br><em>学习</em></div><div class="mt"><svg viewBox="0 0 16 12"><rect x=".5" y=".5" width="15" height="11" rx="2.500" fill="none" stroke="#9499a0" stroke-width="1"/><text x="8" y="8.800" text-anchor="middle" font-size="7" font-weight="bold" fill="#9499a0" font-family="Liberation Sans, sans-serif">UP</text></svg>黑马程序员 · 2018-12-27</div></div>
<div class="card" style="left:1531px;top:549px"><div class="th"><svg class="ti" viewBox="0 0 272 153" width="272" height="153"><rect width="272" height="153" fill="#000"/>
<g font-family="Noto Sans CJK SC, sans-serif" font-weight="bold" font-size="29.500">
<text x="18" y="43" fill="#ffd60a" textLength="236" lengthAdjust="spacingAndGlyphs">值得所有人收藏的</text>
<text x="62" y="88.500" fill="#fff" textLength="147" lengthAdjust="spacingAndGlyphs">计算机视觉</text>
<text x="33" y="133" fill="#ffd60a" textLength="206" lengthAdjust="spacingAndGlyphs">保姆级学习路线</text></g>
</svg><div class="mask"></div><div class="st"><svg viewBox="0 0 18 18"><rect x="2.2" y="3.9" width="13.6" height="10.200" rx="2.400" fill="none" stroke="#fff" stroke-width="1.400"/><path d="M7.100 6.100v5.800l5.200-2.900z" fill="#fff"/></svg><span class="v">733</span><svg viewBox="0 0 18 18"><rect x="2.2" y="3.9" width="13.6" height="10.200" rx="2.400" fill="none" stroke="#fff" stroke-width="1.400"/><path d="M5.500 7.400h.6M8.200 7.400h4.500M5.500 10.600h.6M8.200 10.600h4.500" stroke="#fff" stroke-width="1.300" stroke-linecap="round"/></svg><span class="v">39</span><span class="du">12:23</span></div></div><div class="tt">不可错过！B站最用心的三个月入门<br>计算机视觉<em>学习</em>路线，值得所有人…</div><div class="mt"><svg viewBox="0 0 16 12"><rect x=".5" y=".5" width="15" height="11" rx="2.500" fill="none" stroke="#9499a0" stroke-width="1"/><text x="8" y="8.800" text-anchor="middle" font-size="7" font-weight="bold" fill="#9499a0" font-family="Liberation Sans, sans-serif">UP</text></svg>AI算法工程师Future · 17小时前</div></div>
<div class="card" style="left:92px;top:816px"><div class="th"><svg class="ti" viewBox="0 0 272 153" width="272" height="153"><defs><radialGradient id="t7g" cx=".5" cy=".4" r=".8"><stop offset="0" stop-color="#4a4e57"/><stop offset="1" stop-color="#2f323a"/></radialGradient><filter id="t7b"><feGaussianBlur stdDeviation="6"/></filter></defs>
<rect width="272" height="153" fill="url(#t7g)"/>
<g filter="url(#t7b)" opacity=".35"><path d="M20 20 L120 6 L130 16 L30 36Z" fill="#7a7f88"/><path d="M160 30 L262 10 L266 26 L170 50Z" fill="#747983"/><path d="M10 100 L90 70 L96 84 L14 120Z" fill="#6f747d"/><path d="M150 110 L260 70 L266 90 L160 130Z" fill="#6a6f78"/></g>
<text x="38" y="44.500" font-family="Nanum Pen, DejaVu Sans, Liberation Sans, sans-serif" font-size="30" fill="#f8f8f6" stroke="#f8f8f6" stroke-width=".7" textLength="211" lengthAdjust="spacingAndGlyphs">Machine Learning</text>
<text x="42" y="103.500" font-family="Noto Sans CJK SC, sans-serif" font-weight="400" font-size="23.500" fill="#f6f6f4" textLength="203" lengthAdjust="spacing">机器学习白板推导</text>
<text x="105" y="137.500" font-family="Noto Sans CJK SC, sans-serif" font-weight="400" font-size="23.500" fill="#eeeeec" textLength="79" lengthAdjust="spacing">前33讲</text>
</svg><div class="mask"></div><div class="st"><svg viewBox="0 0 18 18"><rect x="2.2" y="3.9" width="13.6" height="10.200" rx="2.400" fill="none" stroke="#fff" stroke-width="1.400"/><path d="M7.100 6.100v5.800l5.200-2.900z" fill="#fff"/></svg><span class="v">126.9万</span><svg viewBox="0 0 18 18"><rect x="2.2" y="3.9" width="13.6" height="10.200" rx="2.400" fill="none" stroke="#fff" stroke-width="1.400"/><path d="M5.500 7.400h.6M8.200 7.400h4.500M5.500 10.600h.6M8.200 10.600h4.500" stroke="#fff" stroke-width="1.300" stroke-linecap="round"/></svg><span class="v">3万</span><span class="du">60:39:02</span></div></div></div>
<div class="card" style="left:380px;top:816px"><div class="th"><svg class="ti" viewBox="0 0 272 153" width="272" height="153"><defs><radialGradient id="t8g" cx=".72" cy=".62" r=".75"><stop offset="0" stop-color="#08308c"/><stop offset=".5" stop-color="#041a4e"/><stop offset="1" stop-color="#01061a"/></radialGradient>
<radialGradient id="t8f" cx=".35" cy=".3" r=".75"><stop offset="0" stop-color="#2068ee"/><stop offset=".4" stop-color="#0e3cb0"/><stop offset="1" stop-color="#062276"/></radialGradient>
<filter id="t8b"><feGaussianBlur stdDeviation="2.200"/></filter>
<pattern id="t8p" width="3" height="3" patternUnits="userSpaceOnUse"><circle cx="1" cy="1" r=".55" fill="#2a66c8"/></pattern></defs>
<rect width="272" height="153" fill="url(#t8g)"/>
<path d="M30 6 H150 V40 H110 V54 H60 V44 H30Z M200 4 H262 V60 H232 V40 H200Z" fill="url(#t8p)" opacity=".55"/>
<path d="M276 58 C240 54 204 56 184 70 L170 84 C160 90 150 94 136 98 C132 104 140 106 138 112 C130 118 134 124 130 132 C128 142 140 150 150 153 L276 153Z" fill="url(#t8f)"/>
<path d="M170 84 C176 74 186 68 194 66 L186 80Z" fill="#dfeaff"/>
<g filter="url(#t8b)"><path d="M196 60 C230 54 260 56 276 60 L276 84 C250 74 220 72 200 76Z" fill="#041a5a" opacity=".55"/><ellipse cx="176" cy="100" rx="16" ry="10" fill="#3a86ff" opacity=".45"/><ellipse cx="206" cy="122" rx="20" ry="9" fill="#2f7bff" opacity=".3"/></g>
<g fill="#7fc0ff" opacity=".9"><circle cx="204" cy="76" r=".8"/><circle cx="220" cy="64" r=".9"/><circle cx="232" cy="84" r=".8"/><circle cx="246" cy="72" r=".9"/><circle cx="258" cy="90" r=".8"/><circle cx="238" cy="104" r=".9"/><circle cx="214" cy="112" r=".8"/><circle cx="190" cy="122" r=".9"/><circle cx="226" cy="130" r=".8"/><circle cx="250" cy="120" r=".9"/><circle cx="262" cy="106" r=".8"/><circle cx="200" cy="98" r=".9"/><circle cx="176" cy="108" r=".8"/><circle cx="224" cy="60" r=".9"/><circle cx="178" cy="62" r="1.100" fill="#fff"/></g>
<g filter="url(#t8b)" fill="#1e7bff"><circle cx="112" cy="77" r="4"/><circle cx="127" cy="80" r="3.500"/><circle cx="256" cy="27" r="5"/><circle cx="179" cy="112" r="3.500"/><circle cx="192" cy="88" r="3"/><circle cx="120" cy="108" r="3"/><circle cx="154" cy="118" r="3"/><circle cx="74" cy="122" r="2.500"/></g>
<g stroke="#c9d4e6" stroke-width=".5" fill="none" opacity=".85"><path d="M50.500 96 L92.500 4.500M50.500 96 L104.500 53.500M50.500 96 L177.500 29M50.500 96 L82 112.500M50.500 96 L92 117.500M50.500 96 L9 133M50.500 96 L0 106M50.500 96 L0 98M104.500 53.500 L92 117.500M104.500 53.500 L177.500 29M104.500 53.500 L94 64M92 117.500 L9 133M82 112.500 L9 133M92.500 4.500 L56 0M92.500 4.500 L177.500 29M92 109 L82 112.500M92 109 L92 117.500M46 80 L50.500 96 M54 80 L50.500 96"/></g>
<g stroke="#3f7fe0" stroke-width=".5" fill="none" opacity=".7"><path d="M177.500 29 L199 48 L165 62 L151 56 L177.500 29M199 48 L256 27M199 48 L192 88 L165 62M192 88 L154 94 L120 108 L154 118 L192 88M154 118 L179 112 L192 88M120 108 L104.500 53.500 L151 56M154 94 L151 56M179 112 L214 112M154 118 L150 148"/></g>
<g fill="#e8eaf0"><circle cx="50.500" cy="96" r="2.300"/><circle cx="92.500" cy="4.500" r="2"/><circle cx="104.500" cy="53.500" r="2.200"/><circle cx="177.500" cy="29" r="2.300"/><circle cx="82" cy="112.500" r="2.100"/><circle cx="92" cy="117.500" r="2.200"/><circle cx="92" cy="109" r="1.500"/><circle cx="94" cy="64" r="1.500"/><circle cx="9" cy="133" r="2"/><circle cx="2" cy="139" r="1.800"/></g>
<rect x="0" y="0" width="3" height="153" fill="#01040f"/><rect x="3.600" y="0" width=".7" height="153" fill="#bfe6f0" opacity=".8"/><rect x="267.200" y="0" width=".7" height="153" fill="#bfe6f0" opacity=".8"/>
<text x="35" y="33" font-family="Noto Sans CJK SC, sans-serif" font-weight="900" font-size="25.500" fill="#8de6f5" textLength="134" lengthAdjust="spacingAndGlyphs">机器学习</text>
<text x="35" y="45.500" font-family="Liberation Sans, sans-serif" font-weight="bold" font-size="8.800" fill="#fff" textLength="132" lengthAdjust="spacingAndGlyphs">MACHINE LEARNING</text>
</svg><div class="mask"></div><div class="st"><svg viewBox="0 0 18 18"><rect x="2.2" y="3.9" width="13.6" height="10.200" rx="2.400" fill="none" stroke="#fff" stroke-width="1.400"/><path d="M7.100 6.100v5.800l5.200-2.900z" fill="#fff"/></svg><span class="v">62.5万</span><svg viewBox="0 0 18 18"><rect x="2.2" y="3.9" width="13.6" height="10.200" rx="2.400" fill="none" stroke="#fff" stroke-width="1.400"/><path d="M5.500 7.400h.6M8.200 7.400h4.500M5.500 10.600h.6M8.200 10.600h4.500" stroke="#fff" stroke-width="1.300" stroke-linecap="round"/></svg><span class="v">5352</span><span class="du">37:21:15</span></div></div></div>
<div class="card" style="left:668px;top:816px"><div class="th"><svg class="ti" viewBox="0 0 272 153" width="272" height="153"><rect width="272" height="153" fill="#fff"/>
<rect x="8" y="0" width="203.500" height="105.500" fill="#595959"/>
<rect x="214.500" y="0" width="48.500" height="44.500" fill="#4b78c8"/>
<rect x="8" y="110.500" width="255" height="43" fill="#e6e6e6"/>
<g fill="#3f6ec6"><g transform="translate(243.500 69.500)"><circle r="7"/><g id="t9t"><rect x="-2" y="-9.500" width="4" height="19" rx="1"/><rect x="-2" y="-9.500" width="4" height="19" rx="1" transform="rotate(45)"/><rect x="-2" y="-9.500" width="4" height="19" rx="1" transform="rotate(90)"/><rect x="-2" y="-9.500" width="4" height="19" rx="1" transform="rotate(135)"/></g><circle r="3" fill="#fff"/></g>
<g transform="translate(233.500 85.500) rotate(22)"><circle r="7"/><rect x="-2" y="-9.500" width="4" height="19" rx="1"/><rect x="-2" y="-9.500" width="4" height="19" rx="1" transform="rotate(45)"/><rect x="-2" y="-9.500" width="4" height="19" rx="1" transform="rotate(90)"/><rect x="-2" y="-9.500" width="4" height="19" rx="1" transform="rotate(135)"/><circle r="3" fill="#fff"/></g></g>
<text x="73" y="21" font-family="Noto Serif CJK SC, serif" font-weight="900" font-style="italic" font-size="23" fill="#fff" textLength="81" lengthAdjust="spacing" transform="skewX(-6)">国语版</text>
<g font-family="Liberation Sans, sans-serif" fill="#fff"><text x="18" y="49.500" font-size="25.500" textLength="181" lengthAdjust="spacingAndGlyphs">Machine Learning</text><text x="28" y="78.500" font-size="25.500" textLength="163" lengthAdjust="spacingAndGlyphs">(ML)2021/2022</text></g>
<text x="25.500" y="132.500" font-family="Noto Sans CJK SC, sans-serif" font-size="11.500" fill="#666">李宏毅</text>
<text x="25.500" y="152" font-family="Liberation Sans, sans-serif" font-size="11.500" fill="#444">Hung-yi Lee</text>
</svg><div class="mask"></div><div class="st"><svg viewBox="0 0 18 18"><rect x="2.2" y="3.9" width="13.6" height="10.200" rx="2.400" fill="none" stroke="#fff" stroke-width="1.400"/><path d="M7.100 6.100v5.800l5.200-2.900z" fill="#fff"/></svg><span class="v">139.2万</span><svg viewBox="0 0 18 18"><rect x="2.2" y="3.9" width="13.6" height="10.200" rx="2.400" fill="none" stroke="#fff" stroke-width="1.400"/><path d="M5.500 7.400h.6M8.200 7.400h4.500M5.500 10.600h.6M8.200 10.600h4.500" stroke="#fff" stroke-width="1.300" stroke-linecap="round"/></svg><span class="v">2.9万</span><span class="du">87:14:22</span></div></div></div>
<div class="card" style="left:955px;top:816px"><div class="th"><svg class="ti" viewBox="0 0 272 153" width="272" height="153"><rect width="272" height="153" fill="#000"/>
<g font-family="Noto Sans CJK SC, sans-serif" font-weight="900" font-size="28.500"><text x="3" y="29" fill="#fff" stroke="#fff" stroke-width="3.200" stroke-linejoin="round" textLength="193" lengthAdjust="spacingAndGlyphs">研一新生救星!</text><text x="3" y="29" fill="#f0103a" textLength="193" lengthAdjust="spacingAndGlyphs">研一新生救星!</text></g>
<g font-family="Noto Sans CJK SC, Liberation Sans, sans-serif" font-weight="bold" font-size="24.500" fill="#ffd814"><text x="5" y="68" textLength="192" lengthAdjust="spacingAndGlyphs">导师散养怎么办?</text><text x="4" y="101" textLength="163" lengthAdjust="spacingAndGlyphs">怎么选择方向?</text><text x="5" y="134.500" textLength="174" lengthAdjust="spacingAndGlyphs">怎么打kaggle?</text></g>
<!-- man -->
<path d="M216 92 L200 132 C198 140 204 146 210 153 H224 C218 140 220 130 232 110 L240 110 C246 126 256 138 252 153 H268 C272 136 266 112 250 92Z" fill="#1d5bb4" stroke="#0c2a66" stroke-width="1"/>
<g fill="none" stroke-linecap="round" stroke-linejoin="round"><path d="M217 54 L192 29 L214 16 M245 54 L266 20 L246 14" stroke="#143a58" stroke-width="11"/><path d="M217 54 L192 29 L214 16 M245 54 L266 20 L246 14" stroke="#8fd2ef" stroke-width="9"/></g>
<path d="M214 48 L246 48 C252 64 252 84 250 97 C240 101 226 101 214 97 C210 80 210 62 214 48Z" fill="#8fd2ef" stroke="#1d4f78" stroke-width="1"/>
<path d="M230 58 V98" stroke="#5aa6cc" stroke-width=".8"/>
<path d="M220 47 L230 58 L240 47Z" fill="#f4fbff" stroke="#1d4f78" stroke-width=".6"/>
<path d="M210 12 l6-7 7 5 -4 8z M238 9 l7-5 6 7 -7 6z" fill="#f0c9a2" stroke="#3a2a1a" stroke-width=".8"/>
<circle cx="228" cy="30" r="16.500" fill="#f0c9a2" stroke="#3a2a1a" stroke-width="1"/>
<path d="M217 24 C217 13 239 13 239 24 C241 33 238 41 236 44 C232 35 224 35 220 44 C217 40 215 32 217 24Z" fill="#8a1016" stroke="#3a0a0a" stroke-width=".8"/>
<path d="M220 39 q8-6 16 0 l-1 3 q-7-4 -14 0z" fill="#fff"/>
<path d="M224 10 l4 6 4-6" fill="none" stroke="#3a2a1a" stroke-width=".8"/>
<path d="M204 149 h18 v4 h-18z M250 149 h19 v4 h-19z" fill="#5a3a22"/>
</svg><div class="mask"></div><div class="st"><svg viewBox="0 0 18 18"><rect x="2.2" y="3.9" width="13.6" height="10.200" rx="2.400" fill="none" stroke="#fff" stroke-width="1.400"/><path d="M7.100 6.100v5.800l5.200-2.900z" fill="#fff"/></svg><span class="v">4.4万</span><svg viewBox="0 0 18 18"><rect x="2.2" y="3.9" width="13.6" height="10.200" rx="2.400" fill="none" stroke="#fff" stroke-width="1.400"/><path d="M5.500 7.400h.6M8.200 7.400h4.500M5.500 10.600h.6M8.200 10.600h4.500" stroke="#fff" stroke-width="1.300" stroke-linecap="round"/></svg><span class="v">236</span><span class="du">18:16</span></div></div></div>
<div class="card" style="left:1243px;top:816px"><div class="th"><svg class="ti" viewBox="0 0 272 153" width="272" height="153"><defs><linearGradient id="t11g" x1="0" y1="0" x2="0" y2="1"><stop offset="0" stop-color="#33405f"/><stop offset=".45" stop-color="#2a5a6f"/><stop offset="1" stop-color="#1d6976"/></linearGradient></defs>
<rect width="272" height="153" fill="#fff"/>
<rect x="72.300" y="0" width="123.700" height="153" fill="url(#t11g)"/>
<rect x="72.300" y="0" width="12" height="153" fill="#fff" opacity=".06"/><rect x="83.800" y="0" width=".8" height="153" fill="#fff" opacity=".12"/>
<text x="101" y="32" font-family="Noto Sans CJK SC, sans-serif" font-weight="500" font-size="13" fill="#f4f6f8" textLength="82" lengthAdjust="spacing">统计学习方法</text>
<text x="135" y="41" font-family="Noto Sans CJK SC, sans-serif" font-size="3.600" fill="#dfe6ea">(第2版)</text>
<text x="135" y="48.300" font-family="Noto Sans CJK SC, sans-serif" font-size="5" fill="#dfe6ea" letter-spacing="1.500">李航</text><text x="149.500" y="48.300" font-family="Noto Sans CJK SC, sans-serif" font-size="3" fill="#dfe6ea">著</text>
<text transform="translate(74.500 16) rotate(90)" font-family="Noto Sans CJK SC, sans-serif" font-size="5.600" fill="#dfe6ea" textLength="60" lengthAdjust="spacing">统计学习方法(第2版)</text>
<g fill="none" stroke="#c9d6dc" stroke-width=".55" opacity=".9">
<path d="M107 51 L116 60 L112 72 L100 74 L91 65 L95 53Z M107 51 L104 62"/>
<path d="M113 66 l4 1 1.500 4 -2.500 3.500 -4.500-.5 -1.500-3.500z"/>
<path d="M169 63 L188 69 L192 88 L177 101 L158 95 L154 76Z M169 63 L172 78"/>
<path d="M171 99 L194 104 L196 122 L180 121 L160 112 L158 110Z M171 99 L180 121"/>
<path d="M150 105 L162 108 L164 120 L154 127 L142 124 L141 112Z"/><path d="M163 121 L174 124 L176 134 L166 140 L156 136 L153 128Z M176 134 L186 130"/>
<path d="M134 125 L141 127 L142 134 L136 139 L129 137 L128 130Z M134 125 L134 130"/>
</g>
<path d="M170 99 L184 85 L193 87 L173 100Z M154 127 L160 120 L164 121 L157 128Z M108 69 L112 66 L115 70 L111 73Z" fill="#c9d0d4" opacity=".8"/>
</svg><div class="mask"></div><div class="st"><svg viewBox="0 0 18 18"><rect x="2.2" y="3.9" width="13.6" height="10.200" rx="2.400" fill="none" stroke="#fff" stroke-width="1.400"/><path d="M7.100 6.100v5.800l5.200-2.900z" fill="#fff"/></svg><span class="v">23.2万</span><svg viewBox="0 0 18 18"><rect x="2.2" y="3.9" width="13.6" height="10.200" rx="2.400" fill="none" stroke="#fff" stroke-width="1.400"/><path d="M5.500 7.400h.6M8.200 7.400h4.500M5.500 10.600h.6M8.200 10.600h4.500" stroke="#fff" stroke-width="1.300" stroke-linecap="round"/></svg><span class="v">3017</span><span class="du">34:42:12</span></div></div></div>
<div class="card" style="left:1531px;top:816px"><div class="th"><svg class="ti" viewBox="0 0 272 153" width="272" height="153"><defs><linearGradient id="t12g" x1="0" y1="0" x2="1" y2="0"><stop offset="0" stop-color="#e4e4e4"/><stop offset="1" stop-color="#dadada"/></linearGradient><filter id="t12b"><feGaussianBlur stdDeviation=".5"/></filter></defs>
<rect width="272" height="153" fill="url(#t12g)"/>
<text x="15.500" y="27" font-family="DejaVu Sans, Noto Sans CJK SC, sans-serif" font-weight="bold" font-size="28.500" fill="#2a2a2a" textLength="242" lengthAdjust="spacingAndGlyphs">12个机器学习算法</text>
<g font-family="Noto Sans CJK SC, Liberation Sans, sans-serif" font-weight="bold" font-size="20" fill="#e2231a"><text x="13.500" y="57.500" textLength="78" lengthAdjust="spacingAndGlyphs">回归算法</text><text x="23" y="81" textLength="58" lengthAdjust="spacingAndGlyphs">决策树</text><text x="3.500" y="105" textLength="97.500" lengthAdjust="spacingAndGlyphs">支持向量机</text><text x="13.500" y="129" textLength="78" lengthAdjust="spacingAndGlyphs">神经网络</text><text x="13.500" y="154" textLength="77" lengthAdjust="spacingAndGlyphs">Xgboost</text></g>
<g filter="url(#t12b)">
<g fill="none" stroke="#b9c4c9" stroke-width=".6"><path d="M134 114 C150 112 150 94 136 92 M134 116 C144 118 146 128 146 129M160 92 C166 84 166 72 176 68 M160 92 H176 M160 94 C168 98 170 108 176 110M176 68 H200M176 92 H240M176 110 H214"/><path d="M190 88 C220 80 250 84 262 92 C250 104 220 106 190 104" stroke="#c4cfa8" stroke-dasharray="1.500 1"/></g>
<rect x="96" y="111" width="34" height="15" fill="#bdbdbd"/><rect x="99.500" y="108" width="35" height="13.700" rx="1.500" fill="#e6eefb" stroke="#6aa0e0" stroke-width=".8"/>
<text x="106" y="117.500" font-family="Noto Sans CJK SC, sans-serif" font-weight="bold" font-size="5.600" fill="#3a5f95">机器学习</text>
<rect x="132" y="90" width="25" height="10" fill="#c6c6c6"/><rect x="136" y="87" width="24" height="9.600" rx="1" fill="#e6eefb" stroke="#a9c3e6" stroke-width=".5"/><text x="138" y="94" font-family="Noto Sans CJK SC, sans-serif" font-size="4.300" fill="#3a5f95">有监督学习</text>
<rect x="142" y="128" width="25" height="9" fill="#c6c6c6"/><rect x="146" y="124.800" width="23.500" height="9" rx="1" fill="#e6eefb" stroke="#a9c3e6" stroke-width=".5"/><text x="148" y="131.500" font-family="Noto Sans CJK SC, sans-serif" font-size="4.300" fill="#3a5f95">无监督学习</text>
<rect x="202" y="101" width="21" height="6" fill="#c9c9c9"/><rect x="206.400" y="93.500" width="20" height="7.300" rx="1" fill="#3f8de2"/><text x="208.500" y="99" font-family="Noto Sans CJK SC, sans-serif" font-weight="bold" font-size="4.200" fill="#fff">集成学习</text>
<g fill="#8c979c" opacity=".75"><rect x="188" y="60" width="6" height="1.300"/><rect x="202" y="60" width="11" height="1.300"/><rect x="223" y="57" width="10" height="1.300"/><rect x="167" y="67" width="11" height="1.300"/><rect x="225" y="64" width="14" height="1.300"/><rect x="189" y="74" width="5" height="1.300"/><rect x="202" y="74" width="9" height="1.300"/><rect x="221" y="71" width="16" height="1.300"/><rect x="245" y="71" width="17" height="1.300"/><rect x="222" y="77" width="7" height="1.300"/><rect x="168" y="91" width="8" height="1.300"/><rect x="185" y="91" width="6" height="1.300"/><rect x="233" y="91" width="12" height="1.300"/><rect x="254" y="91" width="12" height="1.300"/><rect x="185" y="98" width="8" height="1.300"/><rect x="233" y="98" width="13" height="1.300"/><rect x="255" y="98" width="8" height="1.300"/><rect x="167" y="104" width="7" height="1.300"/><rect x="183" y="104" width="16" height="1.300"/><rect x="167" y="111" width="8" height="1.300"/><rect x="184" y="111" width="34" height="1.300"/><rect x="177" y="122" width="6" height="1.300"/><rect x="192" y="122" width="5" height="1.300"/><rect x="177" y="129" width="6" height="1.300"/><rect x="192" y="129" width="13" height="1.300"/><rect x="163" y="142" width="8" height="1.300"/><rect x="180" y="142" width="8" height="1.300"/></g>
<g stroke="#9fb8d6" stroke-width=".5"><path d="M186 63h26M220 60h16M164 70h16M186 77h26M218 74h22M244 74h20M164 94h14M182 94h12M230 94h18M252 94h16M182 101h14M230 101h18M164 107h12M180 107h22M164 114h12M180 114h40M174 125h12M190 125h10M174 132h12M190 132h18"/></g>
</g>
</svg><div class="mask"></div><div class="st"><svg viewBox="0 0 18 18"><rect x="2.2" y="3.9" width="13.6" height="10.200" rx="2.400" fill="none" stroke="#fff" stroke-width="1.400"/><path d="M7.100 6.100v5.800l5.200-2.900z" fill="#fff"/></svg><span class="v">1.9万</span><svg viewBox="0 0 18 18"><rect x="2.2" y="3.9" width="13.6" height="10.200" rx="2.400" fill="none" stroke="#fff" stroke-width="1.400"/><path d="M5.500 7.400h.6M8.200 7.400h4.500M5.500 10.600h.6M8.200 10.600h4.500" stroke="#fff" stroke-width="1.300" stroke-linecap="round"/></svg><span class="v">159</span><span class="du">13:46:27</span></div></div></div>
<div class="fl" style="top:743px;height:40px;padding-top:4px;line-height:15.400px">新版<br>反馈</div>
<div class="fl" style="top:789px;height:49px"><svg class="abs" style="left:7px;top:4px;width:24px;height:24px" viewBox="0 0 24 24"><path d="M5 12.500 V10.500 a7 7 0 0 1 14 0 v2" fill="none" stroke="#18191c" stroke-width="1.700"/><rect x="2.600" y="11" width="4.600" height="6.600" rx="2.200" fill="none" stroke="#18191c" stroke-width="1.600"/><rect x="16.800" y="11" width="4.600" height="6.600" rx="2.200" fill="none" stroke="#18191c" stroke-width="1.600"/><path d="M19.200 17.600 c-.8 3 -3.500 4.200 -6.600 4.400" fill="none" stroke="#18191c" stroke-width="1.700" stroke-linecap="round"/><circle cx="12.600" cy="22" r="1.100" fill="#18191c"/></svg><span class="abs" style="left:0;top:29px;width:38px;line-height:14px">客服</span></div>
<div class="fl" style="top:844px;height:40px;padding-top:4px;line-height:15.400px">回到<br>旧版</div>

<div id="botline"></div>
</body>
</html>
